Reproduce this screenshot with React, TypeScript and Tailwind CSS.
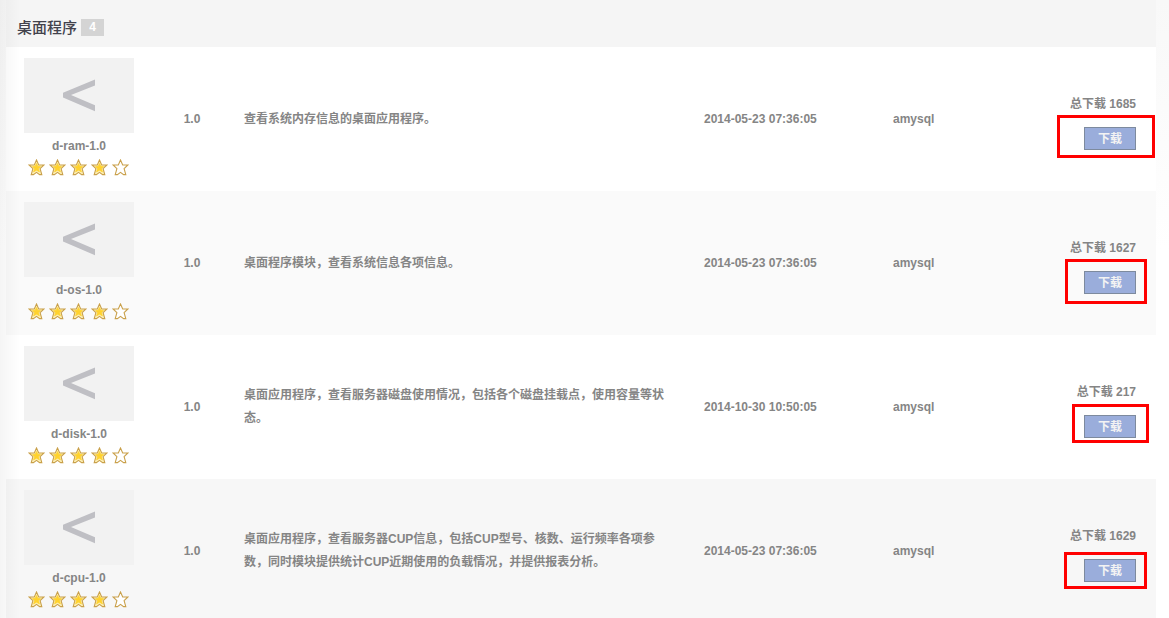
interface DesktopApp {
  name: string;
  version: string;
  description: string;
  updatedAt: string;
  author: string;
  downloads: number;
  rating: number;
  rowClass: string;
  markerClass: string;
}

const APPS: DesktopApp[] = [
  {
    name: "d-ram-1.0",
    version: "1.0",
    description: "查看系统内存信息的桌面应用程序。",
    updatedAt: "2014-05-23 07:36:05",
    author: "amysql",
    downloads: 1685,
    rating: 4,
    rowClass: "bg-white",
    markerClass: "-left-[27px] -right-[19px] -top-3 -bottom-2",
  },
  {
    name: "d-os-1.0",
    version: "1.0",
    description: "桌面程序模块，查看系统信息各项信息。",
    updatedAt: "2014-05-23 07:36:05",
    author: "amysql",
    downloads: 1627,
    rating: 4,
    rowClass: "bg-[#fafafa]",
    markerClass: "-left-[19px] -right-[11px] -top-3 -bottom-[10px]",
  },
  {
    name: "d-disk-1.0",
    version: "1.0",
    description: "桌面应用程序，查看服务器磁盘使用情况，包括各个磁盘挂载点，使用容量等状态。",
    updatedAt: "2014-10-30 10:50:05",
    author: "amysql",
    downloads: 217,
    rating: 4,
    rowClass: "bg-white",
    markerClass: "-left-3 -right-[13px] -top-[11px] -bottom-[5px]",
  },
  {
    name: "d-cpu-1.0",
    version: "1.0",
    description:
      "桌面应用程序，查看服务器CUP信息，包括CUP型号、核数、运行频率各项参数，同时模块提供统计CUP近期使用的负载情况，并提供报表分析。",
    updatedAt: "2014-05-23 07:36:05",
    author: "amysql",
    downloads: 1629,
    rating: 4,
    rowClass: "bg-[#f7f7f7]",
    markerClass: "-left-5 -right-[11px] -top-[7px] -bottom-[7px]",
  },
];

const STAR = "M8.5 1 10.7 6H15.9L12.1 9.7 13.8 15.6H11.6L8.5 13.4 5.4 15.6H3.2L4.9 9.7 1.1 6H6.3Z";
const STAR_CORE = "M8.5 4.6 9.9 7.6H12.4L10.4 9.7 11.4 12.8 8.5 11.2 5.6 12.8 6.6 9.7 4.6 7.6H7.1Z";

function Star({ filled }: { filled: boolean }) {
  return (
    <svg viewBox="0 0 17 17" className="h-[17px] w-[17px]" aria-hidden="true">
      <path d={STAR} fill={filled ? "#fdf0b8" : "#ffffff"} stroke="#c9a04a" strokeWidth="1.1" />
      {filled && <path d={STAR_CORE} fill="#ffd22e" stroke="#ffd22e" strokeWidth="0.8" />}
    </svg>
  );
}

function Rating({ value }: { value: number }) {
  return (
    <div className="flex gap-1 pl-1" role="img" aria-label={`${value} / 5`}>
      {[1, 2, 3, 4, 5].map((n) => (
        <Star key={n} filled={n <= value} />
      ))}
    </div>
  );
}

function AppRow({ app }: { app: DesktopApp }) {
  return (
    <tr className={`h-36 ${app.rowClass}`}>
      <td className="py-0 pl-[18px] align-top">
        <div className="flex w-[110px] flex-col pt-[11px] text-center">
          <div className="flex h-[75px] items-center justify-center bg-[#f2f2f2]">
            <svg viewBox="0 0 34 34" className="h-[34px] w-[34px]" aria-hidden="true">
              <path d="M33 0.6V6.4L9 16 33 26.2V32.2L1 18.6V13.8Z" fill="#bfbfc4" />
            </svg>
          </div>
          <span className="mt-1 leading-[18px]">{app.name}</span>
          <div className="mt-1">
            <Rating value={app.rating} />
          </div>
        </div>
      </td>
      <td className="text-center">{app.version}</td>
      <td className="pr-6 pl-3 leading-[23px]">{app.description}</td>
      <td className="pl-3 whitespace-nowrap">{app.updatedAt}</td>
      <td className="pl-3">{app.author}</td>
      <td className="pr-5">
        <div className="flex flex-col items-end gap-3.5 pt-2.5 pb-1">
          <span className="leading-[18px]">总下载 {app.downloads}</span>
          <div className="relative">
            <button
              type="button"
              className="block h-[23px] w-[52px] border border-[#7d8a9e] bg-[#9aaddb] text-center leading-[22px] font-bold text-[#f3f3f3]"
            >
              下载
            </button>
            <div className={`pointer-events-none absolute border-3 border-[#ff0000] ${app.markerClass}`} />
          </div>
        </div>
      </td>
    </tr>
  );
}

export default function App() {
  return (
    <main className="relative min-h-screen bg-linear-to-b from-[#f8f8f8] to-white to-40% pr-[13px] pl-1.5 font-['Liberation_Sans','Noto_Sans_CJK_SC',sans-serif] text-xs text-[#858585]">
      <header className="flex h-[47px] items-center gap-1 bg-[#f5f5f5] pt-2 pl-[11px]">
        <h1 className="text-[15px] leading-5 font-medium text-[#42424c]">桌面程序</h1>
        <span className="h-[17px] w-[23px] bg-[#d4d4d4] text-center leading-[17px] font-bold text-white">{APPS.length}</span>
      </header>
      <table className="w-full table-fixed border-collapse font-bold">
        <colgroup>
          <col className="w-[146px]" />
          <col className="w-20" />
          <col />
          <col className="w-[189px]" />
          <col className="w-[99px]" />
          <col className="w-44" />
        </colgroup>
        <tbody>
          {APPS.map((app) => (
            <AppRow key={app.name} app={app} />
          ))}
        </tbody>
      </table>
      {/* soft shade along the left edge of the page */}
      <div className="pointer-events-none absolute inset-y-0 left-0 w-5 bg-linear-to-r from-black/4 to-transparent" />
    </main>
  );
}
